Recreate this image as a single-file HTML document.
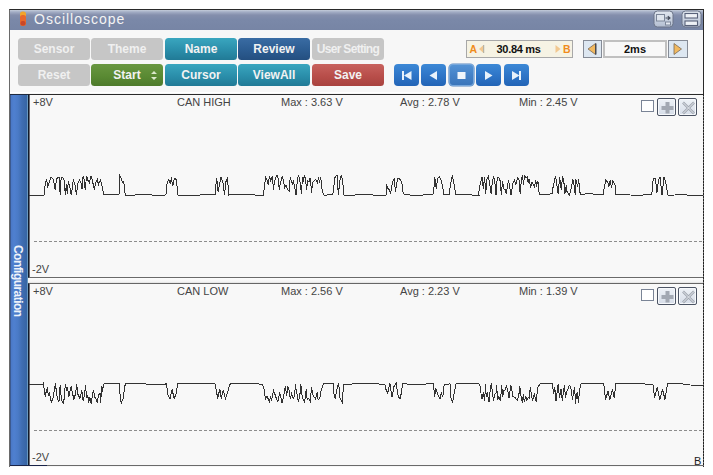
<!DOCTYPE html>
<html><head><meta charset="utf-8">
<style>
*{margin:0;padding:0;box-sizing:border-box}
html,body{width:713px;height:475px;background:#fff;overflow:hidden;font-family:"Liberation Sans",sans-serif}
.a{position:absolute}
#frame{left:9px;top:9px;width:695px;height:458px;background:#f7f7f7;border-top:1px solid #2a2a2a;border-right:1px solid #2a2a2a;border-left:1px solid #6a6a6a}
#title{left:10px;top:10px;width:693px;height:20px;background:linear-gradient(#c4ccda 0,#a3adc5 2px,#848fac 5px,#7a88a8 10px,#7785a5 100%)}
#title .t{left:24px;top:0px;font-size:14px;letter-spacing:1px;color:#f4f4f4;line-height:18px}
.btn{position:absolute;height:22px;width:72px;border-radius:3.5px;color:#f2f2f2;font-weight:bold;font-size:12px;line-height:23px;text-align:center}
.g{background:#c6c6c6;color:#f0f0f0}
.tl{background:linear-gradient(#3aa6bf,#2a8eaa 55%,#217a96)}
.nv{background:linear-gradient(#3a6ca3,#2c5c91 55%,#244f80)}
.gr{background:linear-gradient(#699741,#5a8a33 55%,#4d7a2b)}
.rd{background:linear-gradient(#c8625e,#b84e4a 55%,#a8423e)}
.pb{position:absolute;top:64px;width:25px;height:22px;border-radius:4px;background:linear-gradient(#3c88d6,#2f76c8 50%,#2264b6)}
.pb svg{position:absolute;left:0;top:0}
#strip{left:10px;top:94px;width:18px;height:372px;border-top:1px solid #1e2a40;background:linear-gradient(90deg,#3c5a90 0,#3c5a90 1px,#4a78c6 1px,#4f80d0 4px,#4a7ac6 8px,#3f6db2 12px,#3866a6 16px,#3866a6 17px,#6898c0 17px,#6898c0 18px)}
.panel{position:absolute;left:28px;width:676px;background:#f8f8f8;border-top:1px solid #2a2a2a;border-left:1px solid #101a2c;box-shadow:inset 1px 0 0 #6c6c74}
.lbl{position:absolute;font-size:11px;color:#444;line-height:12px;white-space:nowrap}
.chk{position:absolute;width:13px;height:12px;border:1px solid #7a8496;background:#fff}
.ib{position:absolute;width:19px;height:18px;border:1px solid #4c5464;border-radius:2px;background:linear-gradient(#eef2f7,#d6dde8);box-shadow:inset 0 0 0 1px #f6f8fb}
.ib svg{position:absolute;left:0;top:0}
.box{position:absolute;top:40px;height:18px;border:1px solid #a8a8a8}
</style></head><body>
<div class="a" id="frame"></div>
<div class="a" id="title">
  <svg class="a" style="left:9px;top:1px" width="9" height="16"><rect x="1" y="0.5" width="6" height="6" rx="2.5" fill="#f2a52a"/><rect x="1" y="4" width="6" height="11" rx="2.5" fill="#e8672c"/><rect x="1.5" y="10" width="5" height="4.5" rx="2" fill="#c8482a"/></svg>
  <div class="a t">Oscilloscope</div>
  <svg class="a" style="left:643px;top:0px" width="22" height="19">
    <defs><linearGradient id="tg" x1="0" y1="0" x2="0" y2="1"><stop offset="0" stop-color="#e2e8f1"/><stop offset="1" stop-color="#b2bdd0"/></linearGradient></defs>
    <rect x="1" y="1" width="19" height="16" rx="3.5" fill="url(#tg)" stroke="#6c7589" stroke-width="1"/>
    <rect x="3.5" y="4.5" width="8" height="6.5" fill="#dfe5ee" stroke="#7c8699" stroke-width="1"/>
    <rect x="12.5" y="12" width="5" height="3" fill="#e4e9f1" stroke="#7c8699" stroke-width="1"/>
    <path d="M12.5 8 H16.5 M14.8 6.2 L17 8 L14.8 9.8" stroke="#454c5c" stroke-width="1.1" fill="none"/>
  </svg>
  <svg class="a" style="left:671px;top:0px" width="21" height="19">
    <rect x="1" y="1" width="19" height="16" rx="3.5" fill="url(#tg)" stroke="#6c7589" stroke-width="1"/>
    <rect x="4" y="3.5" width="12.5" height="4.5" fill="#eef1f6" stroke="#59627a" stroke-width="1.1"/>
    <rect x="4" y="11" width="12.5" height="4.5" fill="#eef1f6" stroke="#59627a" stroke-width="1.1"/>
  </svg>
</div>
<!-- toolbar buttons -->
<div class="btn g" style="left:18px;top:38px">Sensor</div>
<div class="btn g" style="left:91px;top:38px">Theme</div>
<div class="btn tl" style="left:165px;top:38px">Name</div>
<div class="btn nv" style="left:238px;top:38px">Review</div>
<div class="btn g" style="left:312px;top:38px;letter-spacing:-0.7px">User Setting</div>
<div class="btn g" style="left:18px;top:64px">Reset</div>
<div class="btn gr" style="left:91px;top:64px">Start<svg class="a" style="left:59px;top:6px" width="8" height="11"><path d="M1 4 L4 1 L7 4 Z M1 7 L4 10 L7 7 Z" fill="#dce8cc"/></svg></div>
<div class="btn tl" style="left:165px;top:64px">Cursor</div>
<div class="btn tl" style="left:238px;top:64px">ViewAll</div>
<div class="btn rd" style="left:312px;top:64px">Save</div>

<!-- cursor box -->
<div class="box" style="left:466px;width:107px;background:#f6f3e4"></div>
<svg class="a" style="left:466px;top:40px" width="107" height="18">
  <text x="3.5" y="12.8" font-family="Liberation Sans" font-weight="bold" font-size="10.5" fill="#f08c1c">A</text>
  <path d="M13 9 L17.5 5 L17.5 13 Z" fill="#f2c890"/><rect x="17.2" y="5" width="1" height="8" fill="#a8a8a0"/>
  <text x="30.5" y="13" font-family="Liberation Sans" font-weight="bold" font-size="11" letter-spacing="-0.3" fill="#111">30.84 ms</text>
  <path d="M89.5 5 L94.5 9 L89.5 13 Z" fill="#f2c890"/>
  <text x="97" y="12.8" font-family="Liberation Sans" font-weight="bold" font-size="10.5" fill="#f08c1c">B</text>
</svg>
<!-- time/div -->
<div class="box" style="left:583px;width:19px;background:#dde7f1;border-color:#858b96"></div>
<svg class="a" style="left:583px;top:40px" width="19" height="18"><path d="M12.5 3.5 L5 9 L12.5 14.5 Z" fill="#f1b960" stroke="#7a6a58" stroke-width="0.8"/><rect x="12" y="3.5" width="1.5" height="11" fill="#4a4a50"/></svg>
<div class="box" style="left:603px;width:64px;background:#f8f8f8;border:2px solid #c0c0c0;text-align:center;font-weight:bold;font-size:11px;line-height:14px;color:#111">2ms</div>
<div class="box" style="left:668px;width:20px;background:#dde7f1;border-color:#858b96"></div>
<svg class="a" style="left:668px;top:40px" width="20" height="18"><path d="M6 3.5 L13.5 9 L6 14.5 Z" fill="#f1b960" stroke="#7a6a58" stroke-width="0.8"/></svg>

<!-- playback -->
<div class="pb" style="left:394px"><svg width="25" height="22"><rect x="8" y="7" width="2" height="9" fill="#e8f2fb"/><path d="M17.5 7 L10 11.5 L17.5 16 Z" fill="#e8f2fb"/></svg></div>
<div class="pb" style="left:421px"><svg width="25" height="22"><path d="M16 7 L8.5 11.5 L16 16 Z" fill="#e8f2fb"/></svg></div>
<div class="pb" style="left:449px;background:linear-gradient(#5594d6,#4582c8 50%,#3a74b8);box-shadow:0 0 0 0.6px #5a88c0,inset 0 0 0 1px #78a8dc"><svg width="25" height="22"><rect x="8.5" y="8" width="8" height="7" fill="#f0f5fb"/></svg></div>
<div class="pb" style="left:476px"><svg width="25" height="22"><path d="M9 7 L16.5 11.5 L9 16 Z" fill="#e8f2fb"/></svg></div>
<div class="pb" style="left:504px"><svg width="25" height="22"><path d="M8 7 L15.5 11.5 L8 16 Z" fill="#e8f2fb"/><rect x="15" y="7" width="2" height="9" fill="#e8f2fb"/></svg></div>

<div class="a" id="strip"></div>
<div class="a" style="left:28px;top:278px;width:676px;height:5px;background:linear-gradient(#fdfdfd,#f4f4f4 70%,#e0e0e0)"></div>
<div class="a" style="left:10px;top:92px;width:693px;height:1px;background:#fff"></div>
<div class="panel" style="top:94px;height:184px;border-bottom:1px solid #6a6a6a"></div>
<div class="panel" style="top:283px;height:183px;border-bottom:1px solid #6a6a6a;border-top-color:#666"></div>
<div class="a" style="left:703px;top:94px;width:1px;height:372px;background:repeating-linear-gradient(#222 0,#222 2px,#777 2px,#777 3px)"></div>

<!-- vertical label -->
<div class="a" style="left:24px;top:244.5px;width:0;height:0">
  <div style="position:absolute;left:0;top:0;transform-origin:0 0;transform:rotate(90deg);font-weight:bold;font-size:12px;letter-spacing:-0.55px;color:#eef2fa;white-space:nowrap;line-height:12px">Configuration</div>
</div>

<!-- panel 1 labels -->
<div class="lbl" style="left:33px;top:96px">+8V</div>
<div class="lbl" style="left:177px;top:96px">CAN HIGH</div>
<div class="lbl" style="left:281px;top:96px">Max : 3.63 V</div>
<div class="lbl" style="left:400px;top:96px">Avg : 2.78 V</div>
<div class="lbl" style="left:519px;top:96px">Min : 2.45 V</div>
<div class="lbl" style="left:32px;top:263px">-2V</div>
<div class="chk" style="left:641px;top:100px"></div>
<div class="ib" style="left:657px;top:98px"><svg width="19" height="18"><path d="M7.5 3 H11.5 V7 H15.5 V11 H11.5 V14.5 H7.5 V11 H3.5 V7 H7.5 Z" fill="#a2a8b2"/></svg></div>
<div class="ib" style="left:678px;top:98px"><svg width="19" height="18"><path d="M4 3.5 L15 14.5 M15 3.5 L4 14.5" stroke="#a0a6b0" stroke-width="2.5"/><path d="M4 3.5 L15 14.5 M15 3.5 L4 14.5" stroke="#e6eaf0" stroke-width="1"/></svg></div>

<!-- panel 2 labels -->
<div class="lbl" style="left:33px;top:285px">+8V</div>
<div class="lbl" style="left:177px;top:285px">CAN LOW</div>
<div class="lbl" style="left:281px;top:285px">Max : 2.56 V</div>
<div class="lbl" style="left:400px;top:285px">Avg : 2.23 V</div>
<div class="lbl" style="left:519px;top:285px">Min : 1.39 V</div>
<div class="lbl" style="left:32px;top:451px">-2V</div>
<div class="chk" style="left:641px;top:289px"></div>
<div class="ib" style="left:657px;top:287px"><svg width="19" height="18"><path d="M7.5 3 H11.5 V7 H15.5 V11 H11.5 V14.5 H7.5 V11 H3.5 V7 H7.5 Z" fill="#a2a8b2"/></svg></div>
<div class="ib" style="left:678px;top:287px"><svg width="19" height="18"><path d="M4 3.5 L15 14.5 M15 3.5 L4 14.5" stroke="#a0a6b0" stroke-width="2.5"/><path d="M4 3.5 L15 14.5 M15 3.5 L4 14.5" stroke="#e6eaf0" stroke-width="1"/></svg></div>

<svg class="a" style="left:0;top:0" width="713" height="475">
  <line x1="34" y1="241.5" x2="703" y2="241.5" stroke="#8c8c8c" stroke-width="1" stroke-dasharray="3 2"/>
  <line x1="34" y1="430.5" x2="703" y2="430.5" stroke="#8c8c8c" stroke-width="1" stroke-dasharray="3 2"/>
  <polyline points="29.0,195.0 36.0,195.3 44.4,195.0 44.7,187.7 45.7,181.4 46.6,179.5 47.6,186.4 49.2,182.6 50.7,177.6 52.6,178.2 53.6,180.7 55.2,189.6 56.4,179.5 57.7,177.6 59.0,177.0 60.2,194.6 61.2,177.0 62.7,177.0 64.0,180.1 65.3,194.6 66.5,183.9 67.2,194.0 68.4,181.4 69.7,186.4 71.3,195.3 73.3,180.1 74.8,183.9 76.4,194.6 78.0,182.6 79.6,179.5 81.2,183.9 82.1,189.0 83.1,175.7 84.0,178.8 85.3,190.2 86.5,175.7 87.8,180.1 89.4,182.6 91.0,176.3 92.2,179.5 93.5,185.8 94.4,189.6 95.4,183.3 97.3,179.5 98.5,184.5 100.4,180.1 101.7,184.5 102.6,189.0 103.6,194.6 110.0,195.0 114.0,194.4 118.9,195.0 119.6,188.0 119.8,175.5 121.0,177.6 122.4,182.5 123.8,181.8 125.2,195.0 135.0,195.0 145.0,194.6 155.0,195.2 165.9,195.0 166.6,186.0 167.3,183.2 168.7,179.7 170.1,183.2 171.5,179.0 172.9,186.0 174.3,178.3 176.4,179.7 177.8,195.0 190.0,195.3 200.0,195.0 206.0,194.0 214.6,194.0 215.3,194.0 215.8,186.0 216.7,178.3 218.1,191.6 221.0,176.9 223.0,183.2 224.5,195.0 225.9,181.8 227.5,177.6 228.7,195.0 235.0,194.4 245.0,194.0 255.0,195.0 263.2,195.3 263.8,192.1 264.7,183.9 265.7,177.6 266.9,179.5 268.2,184.5 269.5,175.7 270.7,181.4 272.3,175.7 273.6,190.2 274.2,183.3 276.1,176.3 277.1,175.1 278.3,178.8 279.3,189.6 280.2,183.9 281.8,178.2 282.4,175.7 283.4,180.7 284.6,187.7 285.9,185.2 287.2,189.0 289.1,190.8 290.3,177.0 291.6,182.6 292.3,183.9 293.6,181.4 294.8,187.7 296.1,195.3 297.4,179.5 298.3,175.7 299.6,178.2 300.8,188.3 301.5,194.0 302.4,177.6 303.4,180.1 304.6,175.1 305.6,179.5 306.5,190.2 307.8,180.7 309.1,181.4 310.3,177.6 311.6,193.4 312.5,182.6 314.1,180.7 315.7,179.5 317.3,182.6 318.5,177.6 319.5,182.6 320.7,176.9 321.7,186.4 322.3,191.5 324.2,195.3 327.0,195.0 332.8,194.5 334.9,177.6 337.0,174.8 338.4,195.0 339.8,180.4 341.2,175.5 342.6,180.4 344.0,195.0 355.0,195.0 362.0,194.0 368.0,194.0 375.0,195.5 386.0,195.5 386.4,184.6 387.8,188.1 389.2,189.5 390.6,193.0 392.7,181.8 394.1,179.0 395.5,191.6 397.6,178.3 399.7,179.0 401.8,181.8 403.2,193.8 410.0,195.0 420.0,195.3 433.4,194.0 434.1,186.0 434.8,176.9 436.2,188.8 437.6,178.3 439.7,176.9 441.1,180.4 441.8,182.5 443.9,194.5 449.5,194.5 450.2,186.0 452.3,175.5 453.7,181.8 455.8,194.5 465.0,194.0 472.0,195.0 479.0,195.0 478.9,192.1 480.2,183.3 482.1,177.0 483.3,189.0 484.6,177.0 485.8,194.0 486.5,180.1 488.4,176.3 490.0,186.4 491.2,194.0 492.2,182.6 493.4,177.0 494.7,180.1 496.0,195.3 497.2,178.2 498.8,177.0 500.1,180.7 501.3,194.6 502.6,181.4 503.8,189.0 505.0,189.5 506.3,194.3 508.4,180.1 511.1,194.9 513.1,182.8 514.4,180.1 515.8,184.2 517.8,177.4 519.1,180.1 520.2,194.3 521.5,178.1 522.5,175.4 523.5,184.8 524.5,174.7 525.9,178.1 527.2,176.8 528.2,182.8 529.2,178.8 530.6,188.2 531.9,182.1 533.3,184.8 534.6,186.9 535.6,180.1 536.6,185.5 538.0,181.5 538.7,189.5 539.3,194.9 546.0,195.0 552.4,193.5 552.4,190.3 553.5,185.2 555.6,175.7 558.1,194.0 559.7,177.0 561.3,190.3 562.6,175.7 564.1,184.0 564.8,194.0 566.4,184.6 567.0,191.5 569.5,195.3 571.7,186.5 572.7,178.9 574.0,185.2 575.2,194.7 575.8,178.9 577.7,186.5 578.7,178.9 579.6,191.5 580.9,194.7 585.0,194.0 592.0,193.8 598.0,195.0 603.8,194.5 603.8,190.2 605.9,179.7 608.0,183.2 608.7,187.4 610.1,180.4 611.5,188.1 612.9,180.4 615.0,185.3 615.7,194.5 622.0,194.0 630.0,195.0 640.0,195.2 650.0,194.5 651.8,195.0 652.4,186.5 653.3,178.3 655.4,178.3 656.9,192.6 658.4,180.4 660.0,176.8 662.0,195.2 664.0,176.8 665.6,181.4 667.1,190.6 668.1,195.2 675.0,195.0 682.0,194.6 690.0,195.2 696.0,195.3 703.0,195.0" fill="none" stroke="#333" stroke-width="1" shape-rendering="crispEdges"/>
  <polyline points="29.0,384.6 40.0,384.6 43.0,384.0 43.4,383.3 44.4,390.6 45.4,397.0 46.0,392.5 47.6,387.5 48.2,395.7 49.5,393.2 50.4,398.8 51.4,402.0 53.0,398.2 54.5,389.4 55.5,383.0 56.4,392.5 57.7,399.5 59.0,401.4 60.2,385.0 60.8,393.2 62.1,402.0 63.7,403.9 64.6,391.3 65.6,384.0 66.5,390.6 67.5,386.8 68.7,397.0 69.7,392.5 71.3,385.6 72.2,391.9 73.9,399.5 75.5,393.8 76.7,384.3 78.0,394.4 79.9,398.2 81.8,390.6 83.1,400.7 84.6,394.4 85.6,385.0 86.5,397.0 87.8,395.7 88.7,403.3 89.7,397.0 91.3,403.9 92.5,393.8 93.5,390.6 94.7,397.0 96.0,398.8 97.3,403.3 98.5,394.4 100.1,393.8 100.7,402.6 101.7,385.6 102.6,391.9 103.3,384.3 104.0,383.8 110.0,383.2 119.2,383.5 119.9,393.0 120.6,400.0 121.3,402.9 123.0,398.7 124.8,386.0 125.6,384.0 130.0,383.2 140.0,383.2 150.0,384.6 165.0,384.6 166.0,383.5 166.5,384.0 167.9,394.5 170.0,398.7 172.1,389.5 174.2,398.7 176.3,393.0 177.7,383.2 190.0,383.2 200.0,384.0 214.9,383.5 216.3,390.2 217.7,398.7 219.8,388.8 221.2,398.7 223.3,390.2 225.4,398.7 227.5,393.0 229.6,384.6 232.0,383.2 250.0,383.2 262.5,384.3 263.5,387.5 264.4,390.6 265.4,399.5 266.9,396.3 267.9,398.2 269.5,402.0 270.4,396.3 271.4,400.7 273.6,390.6 275.2,395.0 276.7,399.5 278.0,401.4 279.6,392.5 280.5,395.7 282.1,403.3 283.7,396.3 285.3,386.2 286.8,395.7 287.5,386.2 289.1,390.6 290.3,398.8 291.6,393.8 292.5,397.0 293.9,398.2 295.8,384.3 296.1,390.6 297.4,395.7 298.3,402.0 299.9,395.0 300.8,383.7 301.5,392.5 302.7,398.2 304.6,402.0 306.2,389.4 307.2,399.5 308.7,398.8 310.3,401.4 311.6,386.8 312.5,394.4 314.1,397.0 315.4,398.8 317.3,392.5 318.2,400.1 319.8,398.2 321.1,390.6 322.3,387.5 323.6,383.7 327.0,383.4 333.0,383.2 333.8,393.0 335.2,398.7 337.3,387.4 338.7,383.2 340.1,398.7 342.2,402.2 343.6,384.6 350.0,384.6 355.0,383.2 370.0,383.2 385.0,384.6 385.6,388.8 387.7,393.0 389.9,383.2 392.0,397.3 394.1,386.0 396.2,383.2 398.3,397.3 400.4,398.7 402.5,384.6 402.8,383.2 410.0,384.6 420.0,384.6 433.7,383.2 434.4,397.3 435.8,388.8 437.9,394.5 440.0,398.7 441.4,393.0 442.8,397.3 444.2,384.6 450.0,383.9 450.5,395.9 452.6,402.9 454.7,390.2 456.1,383.9 470.0,383.2 479.0,383.7 480.5,387.5 481.2,395.7 482.1,398.8 483.4,392.5 484.6,401.4 485.6,384.3 486.2,397.0 487.2,392.5 488.4,398.8 489.1,402.0 490.3,389.4 491.3,383.4 492.2,390.0 493.5,401.4 494.7,394.4 496.0,393.2 496.6,385.0 497.6,400.1 498.8,397.0 500.4,401.4 501.7,385.0 502.6,397.0 503.9,390.6 505.5,389.4 506.4,385.0 507.7,390.6 509.0,398.2 510.8,385.0 511.9,390.6 512.8,396.3 515.0,397.6 517.3,400.1 518.8,395.7 519.8,385.6 520.7,394.4 522.3,402.6 523.3,394.4 524.2,401.4 525.8,396.3 526.7,400.1 528.3,397.6 529.3,398.2 530.2,387.5 531.5,394.4 532.4,400.7 534.3,394.4 536.2,402.0 537.5,388.7 538.7,385.6 539.7,384.9 540.0,384.0 552.2,383.4 552.8,387.5 553.8,393.8 554.7,386.8 556.0,400.7 557.3,390.6 558.2,383.7 559.5,398.2 561.1,388.7 562.3,401.4 563.6,390.6 564.5,385.0 565.5,398.2 566.7,391.3 567.7,390.0 569.3,385.6 570.2,386.2 571.5,390.6 572.4,400.1 573.4,393.2 574.6,386.8 575.6,403.9 576.5,393.8 577.5,392.5 578.4,403.3 579.7,388.7 581.0,384.3 581.3,383.4 595.0,383.6 603.8,384.0 605.5,399.5 608.1,390.9 609.8,399.5 612.4,389.1 614.1,397.8 615.9,384.0 630.0,383.6 645.0,384.0 652.9,384.0 654.7,397.8 657.2,387.4 659.8,399.5 662.4,389.1 665.0,399.5 667.6,384.0 680.0,383.6 690.0,385.0 703.0,385.3" fill="none" stroke="#333" stroke-width="1" shape-rendering="crispEdges"/>
</svg>
<div class="a" style="left:10px;top:465px;width:37px;height:1px;background:#1a2448"></div>
<!-- B marker -->
<div class="a" style="left:694px;top:455px;font-size:11px;line-height:12px;color:#222">B</div>
</body></html>
